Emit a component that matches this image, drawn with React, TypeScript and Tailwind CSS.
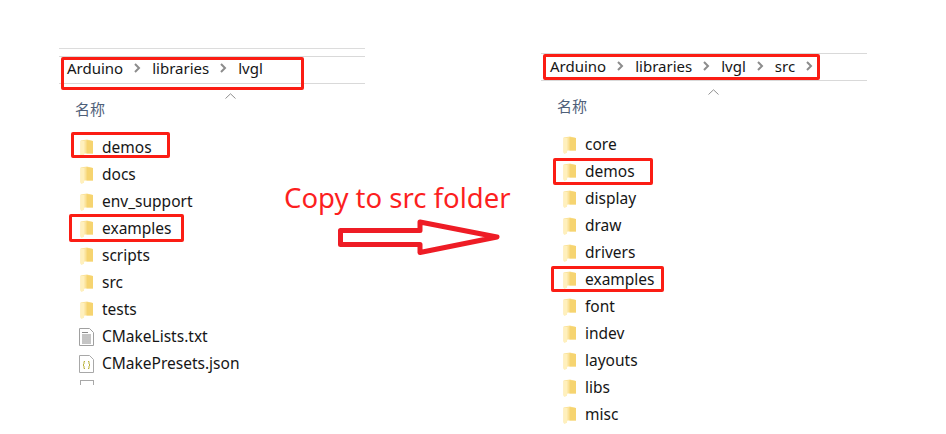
const Folder = () => (
  <svg width="14" height="18" viewBox="0 0 14 18" className="shrink-0">
    <path d="M0.5 1.5 L7 0.5 L13 2 L13 14.5 L4 14.5 L3.5 17 L1 17.5 L0.5 16 Z" fill="#fbe39a" />
    <path d="M6.5 1 L13 2 L13 14.5 L6.5 14.5 Z" fill="#f6d470" />
    <path d="M0.5 2 L4.5 2 L4.5 14.5 L3.5 17 L1 17.5 L0.5 16 Z" fill="#fff0bd" />
  </svg>
)

const TextFile = () => (
  <svg width="15" height="18" viewBox="0 0 15 18" className="shrink-0">
    <path d="M0.5 0.5 H10.5 L14.5 4.5 V17.5 H0.5 Z" fill="#fff" stroke="#a0a0a0" />
    <path d="M3 4.5 H9 M3 7 H12 M3 9 H12 M3 11 H12 M3 13 H12 M3 15 H12" stroke="#8a8a8a" />
  </svg>
)

const JsonFile = () => (
  <svg width="15" height="18" viewBox="0 0 15 18" className="shrink-0">
    <path d="M0.5 0.5 H10.5 L14.5 4.5 V17.5 H0.5 Z" fill="#fff" stroke="#a8a8a8" />
    <path d="M6 6.5 H5 V9 L4 10 L5 11 V13.5 H6 M9 6.5 H10 V9 L11 10 L10 11 V13.5 H9" fill="none" stroke="#b9b23c" />
  </svg>
)

const Sep = () => (
  <svg width="7" height="10" viewBox="0 0 7 10" className="shrink-0">
    <path d="M1 1 L5 5 L1 9" fill="none" stroke="#8c8c8c" strokeWidth="2" />
  </svg>
)

const Caret = () => (
  <svg width="11" height="6" viewBox="0 0 11 6">
    <path d="M0.5 5.5 L5.5 0.8 L10.5 5.5" fill="none" stroke="#8f8f8f" />
  </svg>
)

type Item = { name: string; icon?: "folder" | "text" | "json"; box?: string }

const Row = ({ name, icon = "folder", box }: Item) => (
  <div className="relative flex h-[27px] items-center gap-[9px]">
    <span className="flex w-[13px] justify-center">
      {icon === "folder" && <Folder />}
      {icon === "text" && <TextFile />}
      {icon === "json" && <JsonFile />}
    </span>
    <span>{name}</span>
    {box && <div className={`absolute rounded-[2px] border-[3px] border-[#fb1d14] ${box}`}></div>}
  </div>
)

const Crumbs = ({ parts, trailing }: { parts: string[]; trailing?: boolean }) => (
  <div className="flex items-center text-[15px]">
    {parts.map((p, i) => (
      <div key={p} className="flex items-center">
        {i > 0 && (
          <span className="mx-[11px]">
            <Sep />
          </span>
        )}
        <span>{p}</span>
      </div>
    ))}
    {trailing && (
      <span className="ml-[11px]">
        <Sep />
      </span>
    )}
  </div>
)

const leftItems: Item[] = [
  { name: "demos", box: "left-[-9px] top-[-2px] h-[26px] w-[99px]" },
  { name: "docs" },
  { name: "env_support" },
  { name: "examples", box: "left-[-11px] top-[-1px] h-[28px] w-[115px]" },
  { name: "scripts" },
  { name: "src" },
  { name: "tests" },
  { name: "CMakeLists.txt", icon: "text" },
  { name: "CMakePresets.json", icon: "json" },
]

const rightItems: Item[] = [
  { name: "core" },
  { name: "demos", box: "left-[-10px] top-0 h-[27px] w-[100px]" },
  { name: "display" },
  { name: "draw" },
  { name: "drivers" },
  { name: "examples", box: "left-[-12px] top-0 h-[26px] w-[113px]" },
  { name: "font" },
  { name: "indev" },
  { name: "layouts" },
  { name: "libs" },
  { name: "misc" },
]

export default function App() {
  return (
    <div className="flex h-[434px] w-[946px] overflow-hidden bg-white font-['Noto_Sans','Noto_Sans_CJK_SC',sans-serif] text-[15.5px] text-[#161616]">
      <div className="ml-[59px] w-[306px] shrink-0 pt-[48px]">
        <div className="h-[8px] border-t border-[#dcdcdc]"></div>
        <div className="relative flex h-[28px] items-center border-y border-[#d9d9d9] pb-[4px] pl-[8px]">
          <Crumbs parts={["Arduino", "libraries", "lvgl"]} />
          <div className="absolute left-[2px] top-0 h-[33px] w-[243px] rounded-[2px] border-[3px] border-[#fb1d14]"></div>
        </div>
        <div className="ml-[166px] mt-[9px] flex">
          <Caret />
        </div>
        <div className="ml-[16px] text-[15px] leading-[21px] text-[#4f6079]">名称</div>
        <div className="ml-[21px] mt-[14px]">
          {leftItems.map((item) => (
            <Row key={item.name} {...item} />
          ))}
          <div className="mt-[3px] h-[5px] w-[14px] border border-b-0 border-[#a8a8a8]"></div>
        </div>
      </div>

      <div className="-ml-[81px] w-[257px] shrink-0 pt-[177px]">
        <div className="text-[27.5px] leading-[42px] text-[#fc1f1f]">Copy to src folder</div>
        <svg width="164" height="40" viewBox="0 0 164 40" className="ml-[54px] mt-[-1px]">
          <path
            d="M2.5 12.5 H82 V4 L159 19 L82 34.5 V26.5 H2.5 Z"
            fill="#fff"
            stroke="#ee1c25"
            strokeWidth="5"
            strokeLinejoin="round"
          />
        </svg>
      </div>

      <div className="w-[326px] shrink-0 pt-[53px]">
        <div className="relative flex h-[28px] items-center border-y border-[#d9d9d9] pb-[2px] pl-[9px]">
          <Crumbs parts={["Arduino", "libraries", "lvgl", "src"]} trailing />
          <div className="absolute left-[2px] top-0 h-[26px] w-[277px] rounded-[2px] border-[3px] border-[#fb1d14]"></div>
        </div>
        <div className="ml-[167px] mt-[8px] flex">
          <Caret />
        </div>
        <div className="ml-[16px] mt-[1px] text-[15px] leading-[21px] text-[#4f6079]">名称</div>
        <div className="ml-[22px] mt-[14px]">
          {rightItems.map((item) => (
            <Row key={item.name} {...item} />
          ))}
        </div>
      </div>
    </div>
  )
}
